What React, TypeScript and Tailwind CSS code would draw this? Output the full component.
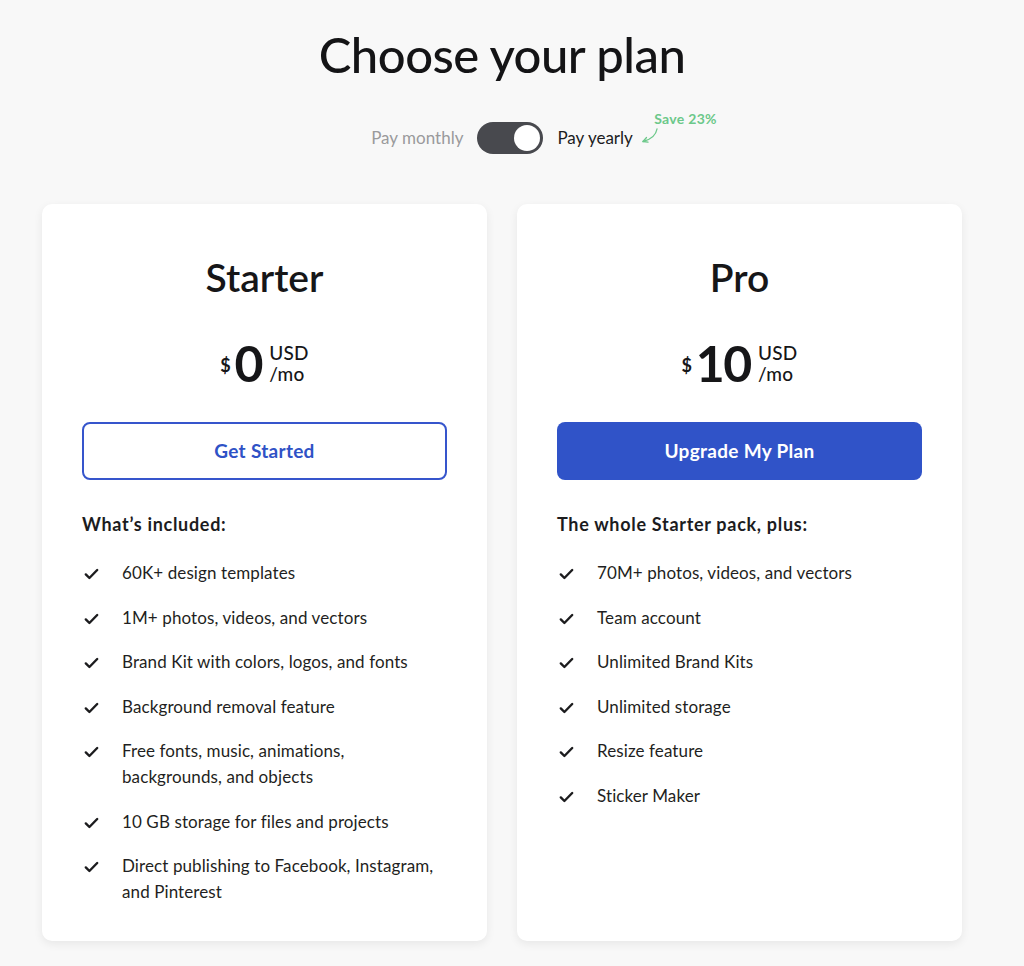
import { Fragment } from "react";

type Plan = {
  name: string;
  price: string;
  cta: string;
  primary: boolean;
  heading: string;
  features: string[][];
};

const plans: Plan[] = [
  {
    name: "Starter",
    price: "0",
    cta: "Get Started",
    primary: false,
    heading: "What’s included:",
    features: [
      ["60K+ design templates"],
      ["1M+ photos, videos, and vectors"],
      ["Brand Kit with colors, logos, and fonts"],
      ["Background removal feature"],
      ["Free fonts, music, animations,", "backgrounds, and objects"],
      ["10 GB storage for files and projects"],
      ["Direct publishing to Facebook, Instagram,", "and Pinterest"],
    ],
  },
  {
    name: "Pro",
    price: "10",
    cta: "Upgrade My Plan",
    primary: true,
    heading: "The whole Starter pack, plus:",
    features: [
      ["70M+ photos, videos, and vectors"],
      ["Team account"],
      ["Unlimited Brand Kits"],
      ["Unlimited storage"],
      ["Resize feature"],
      ["Sticker Maker"],
    ],
  },
];

function Check() {
  return (
    <svg
      className="w-[15px] h-[12px] shrink-0 mt-[8px]"
      viewBox="0 0 15 12"
      fill="none"
      stroke="#1c1c1e"
      strokeWidth={2.4}
      strokeLinecap="round"
      strokeLinejoin="round"
    >
      <path d="M1.8 6.4l3.6 3.6L13.2 2" />
    </svg>
  );
}

function PlanCard({ plan }: { plan: Plan }) {
  return (
    <div className="w-[445px] h-[737px] bg-white rounded-[10px] shadow-[0_3px_10px_rgba(0,0,0,0.07)] px-[40px] pt-[50px]">
      <h2 className="text-center text-[39px] leading-[46px] font-semibold text-[#161618]">
        {plan.name}
      </h2>

      {/* Price */}
      <div className="flex justify-center items-start mt-[38px] text-[#161618]">
        <span className="text-[18px] font-bold mt-[14px] mr-[4px]">$</span>
        <span className="text-[50px] leading-[50px] font-bold tracking-[-1.5px]">
          {plan.price}
        </span>
        <span className="flex flex-col ml-[7px] mt-[4px] text-[19px] leading-[21px] font-medium tracking-[0.3px]">
          <span>USD</span>
          <span>/mo</span>
        </span>
      </div>

      <button
        className={
          plan.primary
            ? "mt-[34px] w-full h-[58px] rounded-[8px] bg-[#3053c8] text-white text-[19px] font-bold tracking-[0.3px]"
            : "mt-[34px] w-full h-[58px] rounded-[8px] border-2 border-[#3655cc] bg-white text-[#2f52c6] text-[19px] font-bold tracking-[0.3px]"
        }
      >
        {plan.cta}
      </button>

      <h3 className="mt-[32px] text-[18px] leading-[24px] font-bold text-[#1c1c1e] tracking-[0.7px]">
        {plan.heading}
      </h3>

      <ul className="mt-[24px] flex flex-col gap-[18.5px]">
        {plan.features.map((lines) => (
          <li key={lines[0]} className="flex gap-[23px] pl-[2px]">
            <Check />
            <span className="text-[17px] leading-[26px] text-[#1f1f22] tracking-[0.1px]">
              {lines.map((l, i) => (
                <Fragment key={l}>
                  {i > 0 && <br />}
                  {l}
                </Fragment>
              ))}
            </span>
          </li>
        ))}
      </ul>
    </div>
  );
}

export default function App() {
  return (
    <div
      className="min-h-[966px] bg-[#f8f8f8] text-[#161618]"
      style={{ fontFamily: "Lato, 'Open Sans', sans-serif" }}
    >
      <div className="w-[1004px] flex flex-col items-center pt-[24px]">
        <h1 className="text-[49px] leading-[60px] font-medium tracking-[-0.5px] text-[#141416]">
          Choose your plan
        </h1>

        {/* Billing toggle */}
        <div className="relative flex items-center gap-[14px] mt-[38px]">
          <span className="text-[17px] text-[#9a9a9c]">Pay monthly</span>
          <div className="w-[66px] h-[32px] rounded-full bg-[#48494e] flex items-center justify-end p-[3px]">
            <div className="w-[26px] h-[26px] rounded-full bg-white" />
          </div>
          <span className="text-[17px] text-[#1c1c1e]">Pay yearly</span>

          {/* Save badge */}
          <span className="absolute left-[283px] top-[-11px] whitespace-nowrap text-[14px] leading-[16px] font-bold text-[#6cc88a] tracking-[0.3px]">
            Save 23%
          </span>
          <svg
            className="absolute left-[269px] top-[6px] w-[20px] h-[16px]"
            viewBox="0 0 20 16"
            fill="none"
            stroke="#6cc88a"
            strokeWidth={1.3}
            strokeLinecap="round"
            strokeLinejoin="round"
          >
            <path d="M17 1C16 7 11 11.5 3 13.5" />
            <path d="M6.5 9.5L3 13.5l5 0.6" />
          </svg>
        </div>

        {/* Plans */}
        <div className="flex gap-[30px] mt-[50px]">
          {plans.map((p) => (
            <PlanCard key={p.name} plan={p} />
          ))}
        </div>
      </div>
    </div>
  );
}
